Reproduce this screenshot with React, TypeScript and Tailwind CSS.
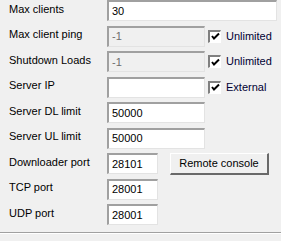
import type { ReactNode } from 'react'

const font = { fontFamily: '"Liberation Sans", Tahoma, Arial, sans-serif' }

function Field({ value, disabled, w = 'w-[98px]' }: { value: string; disabled?: boolean; w?: string }) {
  return (
    <div
      className={`${w} h-[21px] border-t-2 border-l-2 border-t-[#a0a0a0] border-l-[#a0a0a0] border-b border-r border-b-[#e3e3e3] border-r-[#e3e3e3] flex items-center pl-[3px] text-[11px] ${
        disabled ? 'bg-[#f0f0f0] text-[#6d6d6d]' : 'bg-white text-black'
      }`}
    >
      {value}
    </div>
  )
}

function Check({ label }: { label: string }) {
  return (
    <div className="flex items-center ml-[3px]">
      <div className="w-[13px] h-[13px] border-t-2 border-l-2 border-t-[#808080] border-l-[#808080] border-b border-r border-b-white border-r-white bg-white flex items-center justify-center">
        <svg width="9" height="9" viewBox="0 0 9 9">
          <path d="M1 4 L3 6.5 L8 1.5" stroke="#000" strokeWidth="2" fill="none" />
        </svg>
      </div>
      <span className="ml-[5px] text-[11px] text-[#000033]">{label}</span>
    </div>
  )
}

function Row({ label, children }: { label: string; children: ReactNode }) {
  return (
    <div className="flex items-center h-[21px]">
      <span className="w-[107px] pl-[9px] text-[11px] text-black -mt-[3px]">{label}</span>
      {children}
    </div>
  )
}

export default function App() {
  return (
    <div className="w-[281px] h-[241px] bg-[#f0f0f0] overflow-hidden" style={font}>
      <div className="flex flex-col gap-[4.5px]">
        <Row label="Max clients">
          <Field value="30" w="w-[170px]" />
        </Row>
        <Row label="Max client ping">
          <Field value="-1" disabled />
          <Check label="Unlimited" />
        </Row>
        <Row label="Shutdown Loads">
          <Field value="-1" disabled />
          <Check label="Unlimited" />
        </Row>
        <Row label="Server IP">
          <Field value="" />
          <Check label="External" />
        </Row>
        <Row label="Server DL limit">
          <Field value="50000" />
        </Row>
        <Row label="Server UL limit">
          <Field value="50000" />
        </Row>
        <Row label="Downloader port">
          <Field value="28101" w="w-[51px]" />
          <button className="ml-[12px] w-[99px] h-[22px] bg-[#f0f0f0] border-t border-l border-t-white border-l-white border-b-2 border-r-2 border-b-[#696969] border-r-[#696969] text-[11px] text-black">
            Remote console
          </button>
        </Row>
        <Row label="TCP port">
          <Field value="28001" w="w-[51px]" />
        </Row>
        <Row label="UDP port">
          <Field value="28001" w="w-[51px]" />
        </Row>
      </div>
      <div className="mt-[7px] border-t border-t-[#a0a0a0] border-b border-b-white" />
    </div>
  )
}
